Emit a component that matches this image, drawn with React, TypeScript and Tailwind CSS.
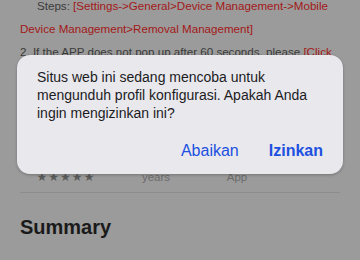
const stats = [
	{ value: "4.9", label: "★★★★★", w: "w-[92px]", star: true },
	{ value: "12+", label: "years", w: "w-[88px]", star: false },
	{ value: "#1", label: "App", w: "w-[74px]", star: false },
];

const App = () => {
	return (
		<div className="relative w-[360px] h-[260px] overflow-hidden bg-[#9b9b9b] font-['Liberation_Sans',Arial,sans-serif]">

			{/* page behind the alert */}
			<div className="px-[20px] -mt-[6px]">
				<p className="text-[11.6px] leading-[23px] text-[#3a3a3a] whitespace-nowrap">
					<span className="pl-[17px]">Steps: </span>
					<span className="text-[#a31818]">[Settings-&gt;General&gt;Device Management-&gt;Mobile</span>
					<br />
					<span className="text-[#a31818]">Device Management&gt;Removal Management]</span>
				</p>
				<p className="text-[11.6px] leading-[23px] text-[#3a3a3a]">
					2. If the APP does not pop up after 60 seconds, please <span className="text-[#a31818]">[Click here]</span>
				</p>

				<div className="flex mt-[62px] pb-[8px] border-b border-[#8c8c8c]">
					{stats.map((s) => (
						<div key={s.label} className={`${s.w} flex flex-col items-center`}>
							<span className="text-[18px] leading-[22px] font-bold text-[#444]">{s.value}</span>
							{s.star ? (
								<span className="text-[12px] leading-[14px] tracking-[1px] text-[#5a5a5a] font-['DejaVu_Sans',sans-serif]">{s.label}</span>
							) : (
								<span className="text-[11.5px] leading-[14px] text-[#6b6b6b]">{s.label}</span>
							)}
						</div>
					))}
				</div>

				<h2 className="mt-[22px] text-[20px] leading-[24px] font-bold text-[#1a1a1a]">Summary</h2>
			</div>

			{/* alert */}
			<div className="absolute left-[17px] top-[55px] w-[326px] h-[119px] rounded-[13px] bg-[#e9e8ed] shadow-[0_1px_3px_rgba(0,0,0,0.25)] flex flex-col">
				<p className="pt-[13px] px-[20px] text-[14px] leading-[18px] text-[#1c1c1e]">
					Situs web ini sedang mencoba untuk mengunduh profil konfigurasi. Apakah Anda ingin mengizinkan ini?
				</p>
				<div className="mt-auto mb-[13px] pr-[20px] flex justify-end gap-[30px] text-[16px] leading-[20px] text-[#2050e0]">
					<button>Abaikan</button>
					<button className="font-bold">Izinkan</button>
				</div>
			</div>

		</div>
	)
}

export default App;
